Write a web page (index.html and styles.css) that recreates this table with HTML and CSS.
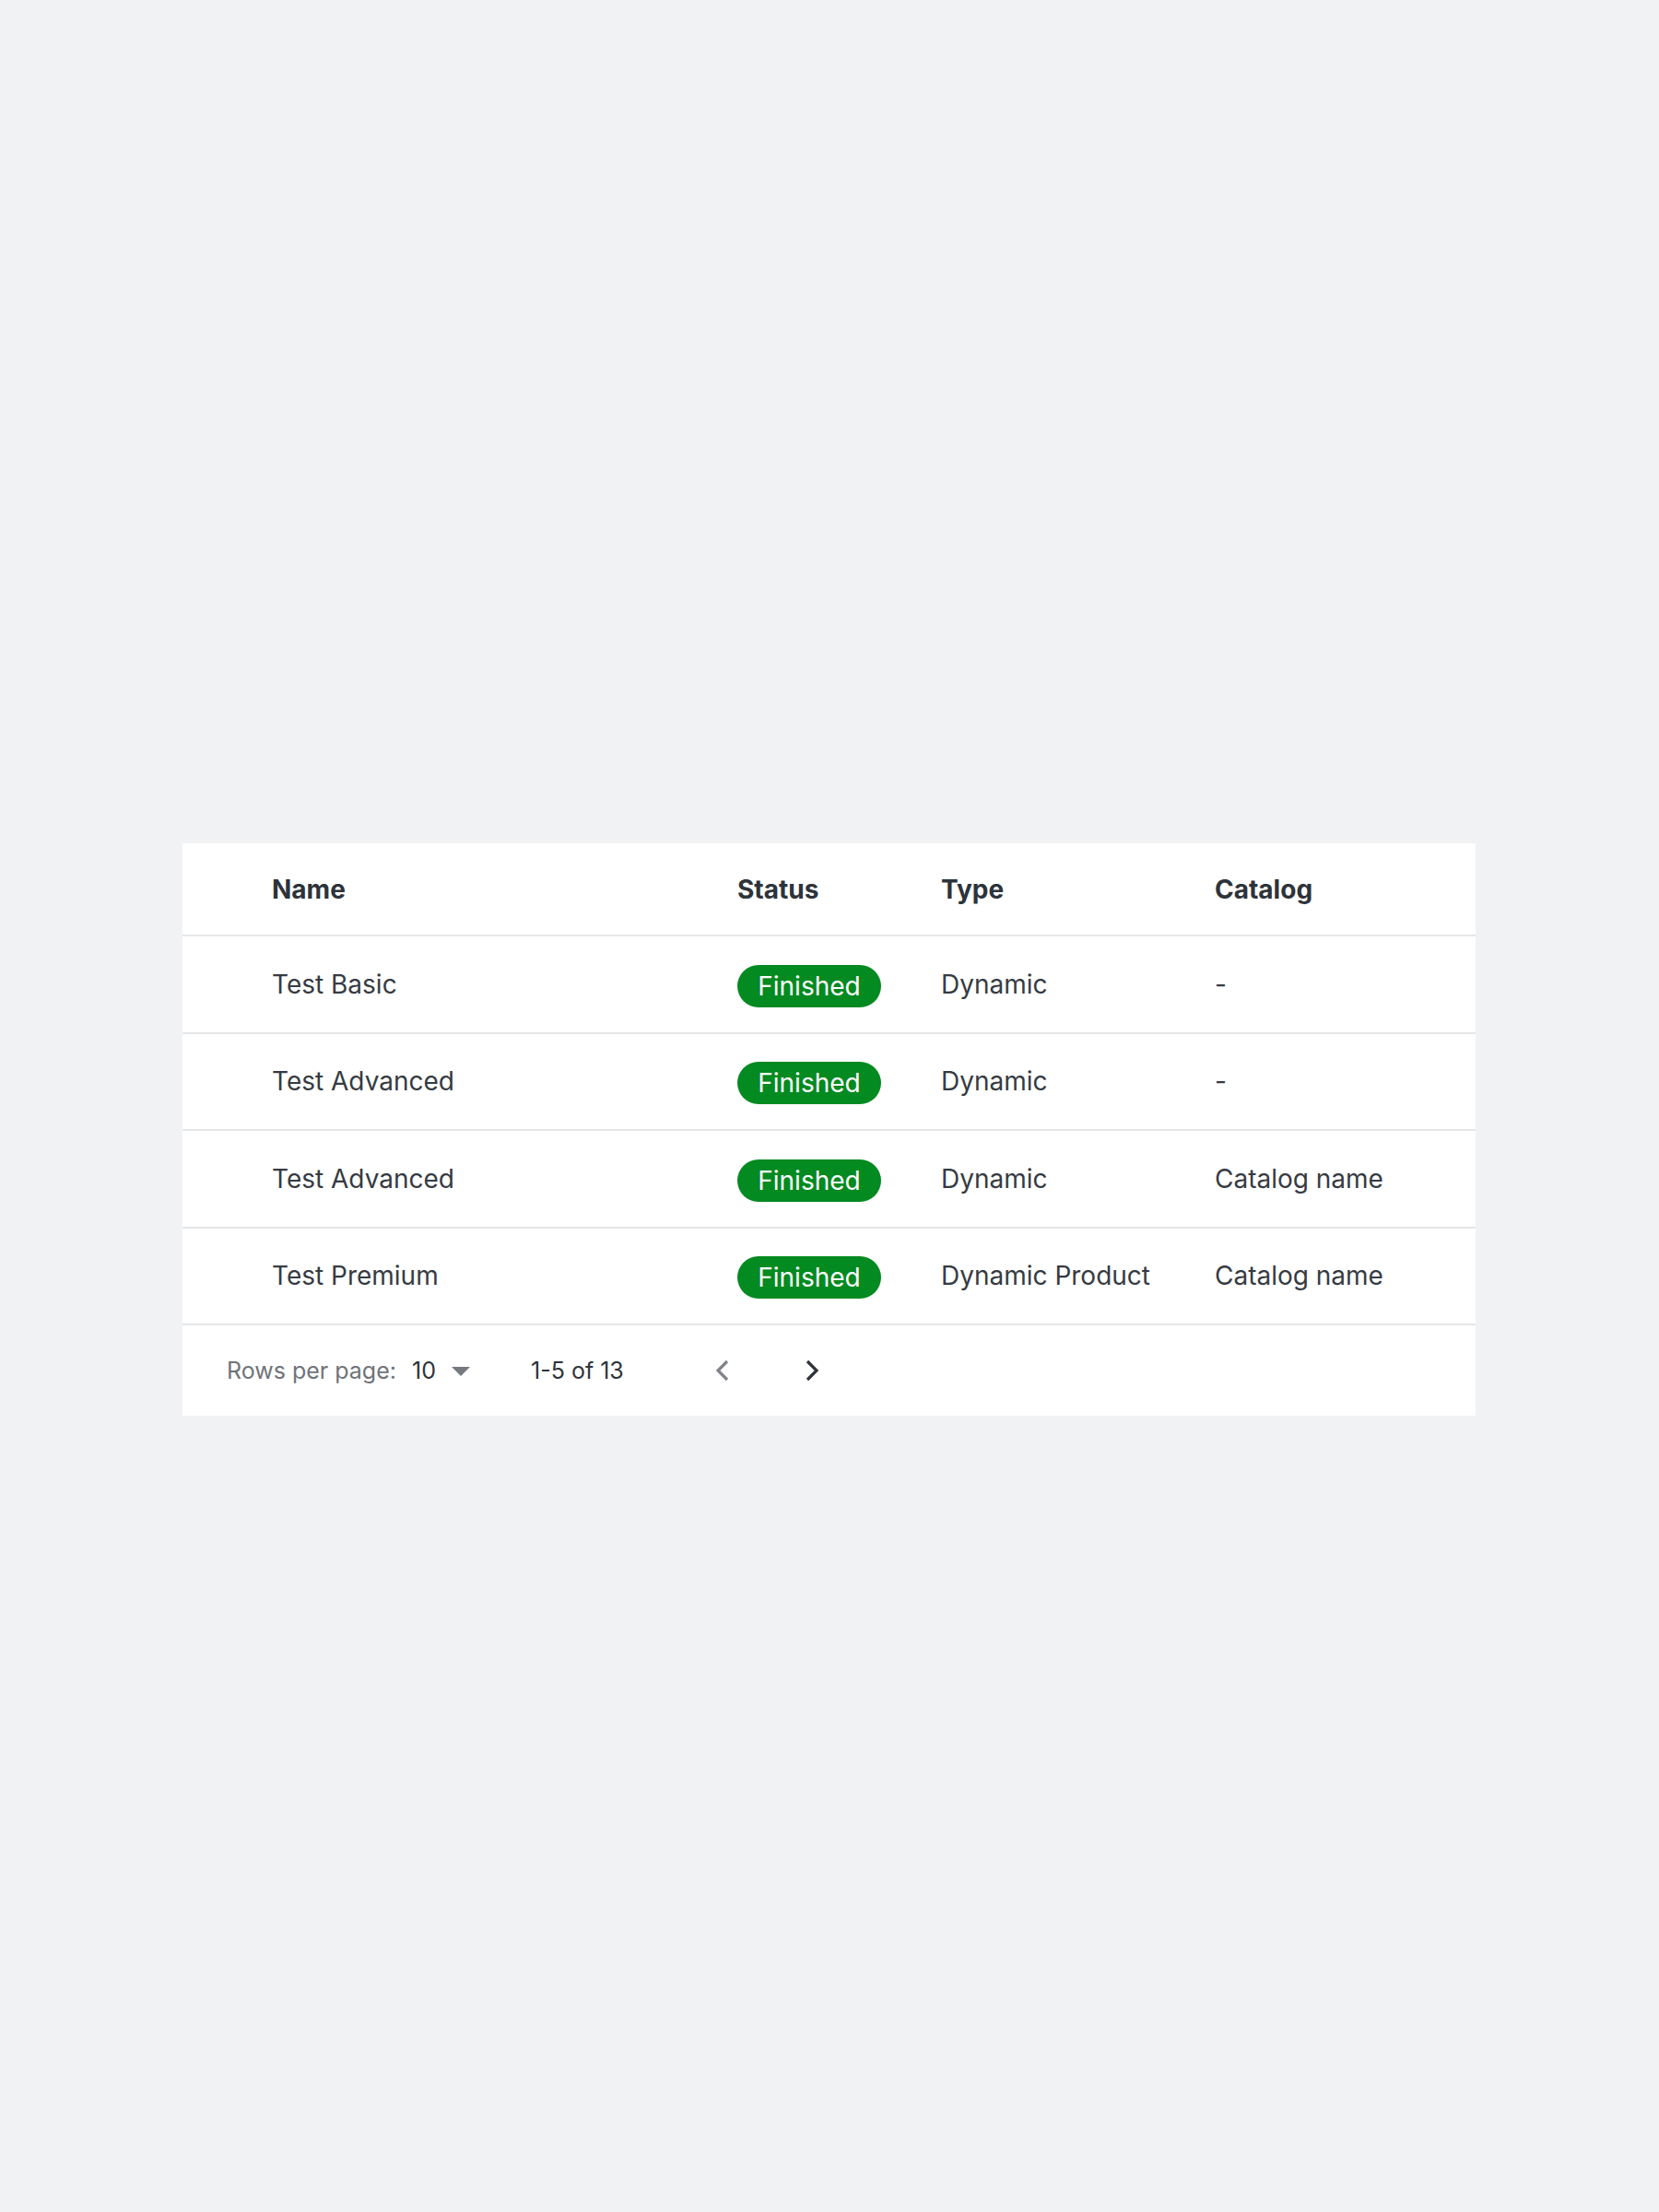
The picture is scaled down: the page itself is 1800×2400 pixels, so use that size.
FILE: index.html
```html
<!DOCTYPE html>
<html lang="en">
<head>
<meta charset="utf-8">
<title>Table</title>
<link rel="stylesheet" href="styles.css">
</head>
<body>
<div class="card">
  <div class="row head">
    <div class="cell">Name</div>
    <div class="cell">Status</div>
    <div class="cell">Type</div>
    <div class="cell">Catalog</div>
  </div>
  <div class="row">
    <div class="cell">Test Basic</div>
    <div class="cell"><span class="badge">Finished</span></div>
    <div class="cell">Dynamic</div>
    <div class="cell">-</div>
  </div>
  <div class="row">
    <div class="cell">Test Advanced</div>
    <div class="cell"><span class="badge">Finished</span></div>
    <div class="cell">Dynamic</div>
    <div class="cell">-</div>
  </div>
  <div class="row">
    <div class="cell">Test Advanced</div>
    <div class="cell"><span class="badge">Finished</span></div>
    <div class="cell">Dynamic</div>
    <div class="cell">Catalog name</div>
  </div>
  <div class="row">
    <div class="cell">Test Premium</div>
    <div class="cell"><span class="badge">Finished</span></div>
    <div class="cell">Dynamic Product</div>
    <div class="cell">Catalog name</div>
  </div>
  <div class="footer">
    <span class="rpp-label">Rows per page:</span>
    <span class="rpp-value">10</span>
    <svg class="caret" width="20" height="10" viewBox="0 0 20 10"><path d="M0 0 L20 0 L10 10 Z" fill="#767a80"/></svg>
    <span class="range">1-5 of 13</span>
    <svg class="chev prev" width="17" height="24" viewBox="0 0 17 24"><path d="M14 2 L4 12 L14 22" fill="none" stroke="#80848a" stroke-width="3.2"/></svg>
    <svg class="chev next" width="17" height="24" viewBox="0 0 17 24"><path d="M3 2 L13 12 L3 22" fill="none" stroke="#2f343b" stroke-width="3.2"/></svg>
  </div>
</div>
</body>
</html>
```

FILE: styles.css
```css
html, body {
  margin: 0;
  padding: 0;
  background: #f1f2f4;
  font-family: Inter, "Liberation Sans", sans-serif;
}

.card {
  width: 1403px;
  margin: 915px 0 0 198px;
  background: #ffffff;
}

.row {
  display: grid;
  grid-template-columns: 505px 221px 297px 1fr;
  align-items: center;
  padding-left: 97px;
  height: 105.5px;
  box-sizing: border-box;
  border-bottom: 2px solid #e5e6e8;
  font-size: 28px;
  color: #363b43;
}

.row.head {
  height: 101px;
  font-weight: 700;
  color: #2d333a;
}

.cell {
  white-space: nowrap;
}

.badge {
  display: inline-flex;
  align-items: center;
  justify-content: center;
  width: 156px;
  height: 46px;
  border-radius: 23px;
  background: #038a21;
  color: #ffffff;
  font-size: 28px;
  margin-top: 4px;
}

.footer {
  display: flex;
  align-items: center;
  height: 98px;
  padding-left: 48px;
  font-size: 25px;
  color: #2f343b;
}

.rpp-label {
  color: #6f747a;
  width: 184px;
}

.rpp-value {
  margin-left: 17px;
  width: 27px;
}

.caret {
  margin-left: 16px;
  margin-top: 2px;
}

.range {
  margin-left: 66px;
  width: 105px;
}

.chev.prev {
  margin-left: 94px;
}

.chev.next {
  margin-left: 81px;
}
```
